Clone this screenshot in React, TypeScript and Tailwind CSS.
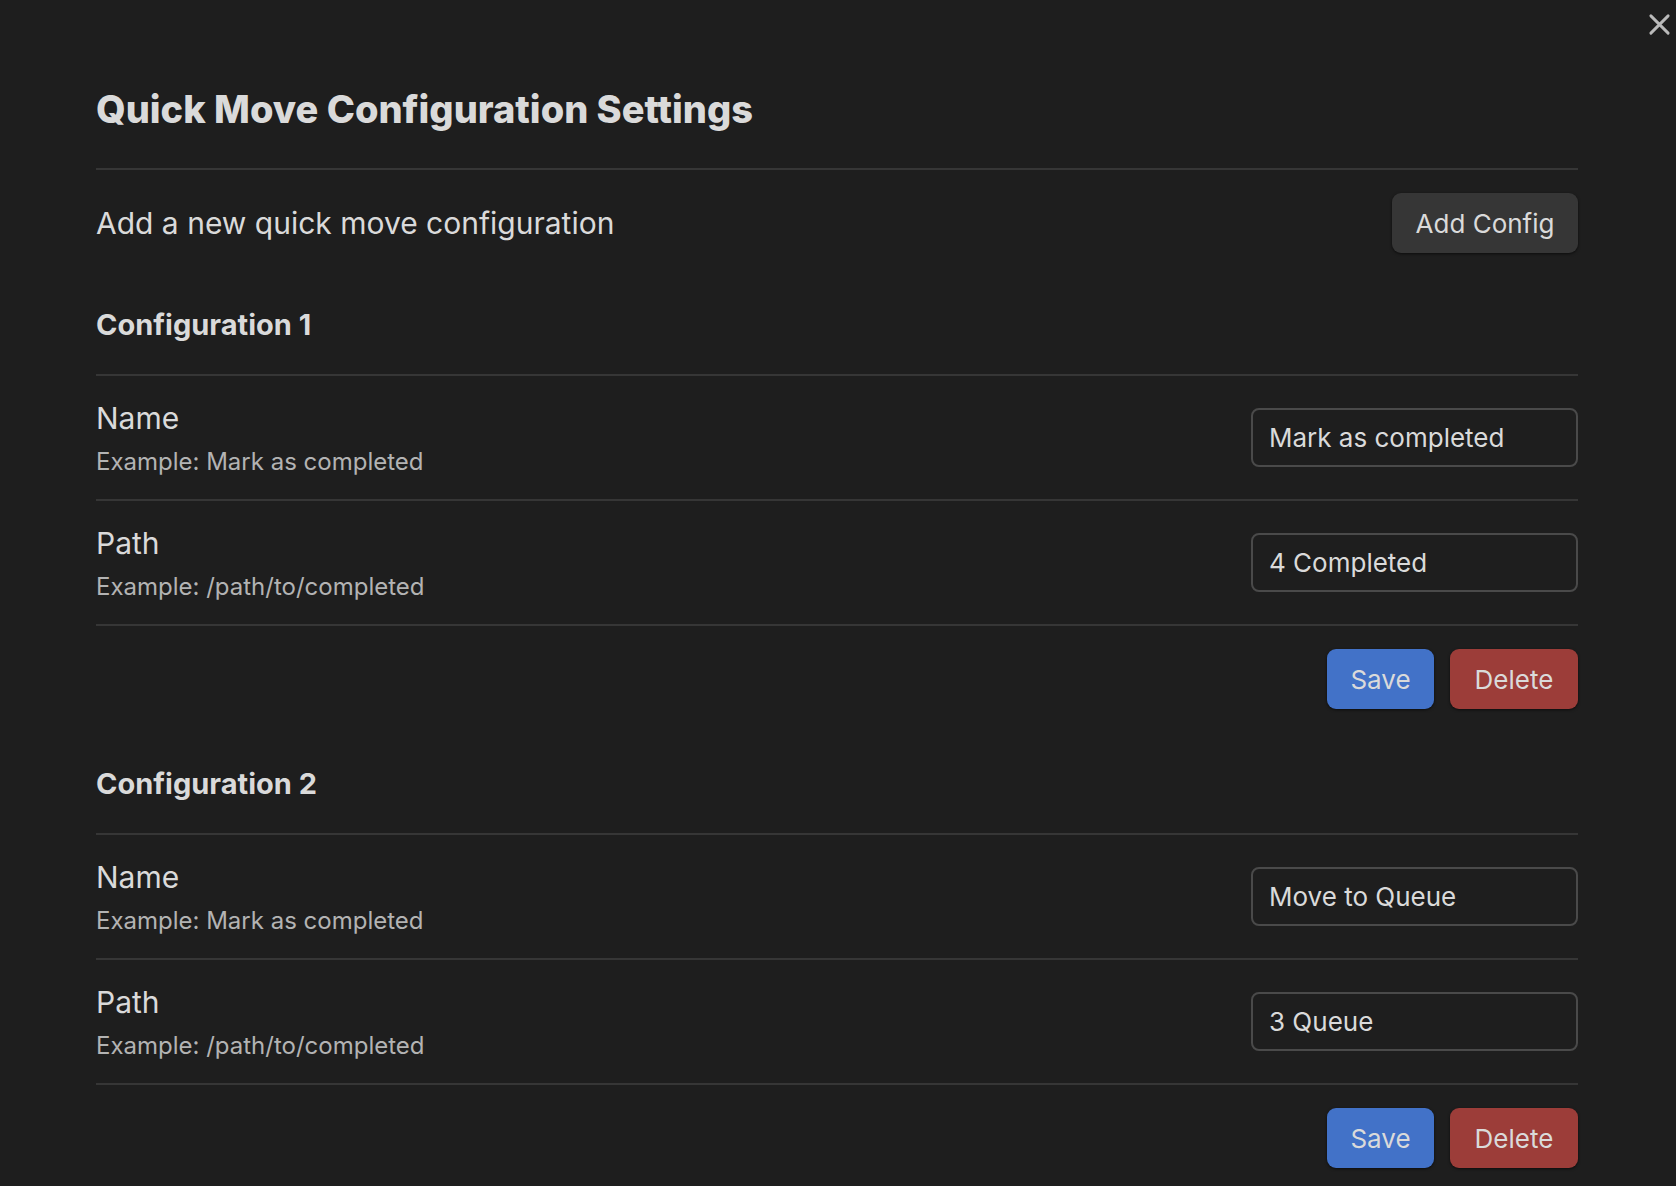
import React from 'react';

type Config = { name: string; path: string };

const configs: Config[] = [
  { name: 'Mark as completed', path: '4 Completed' },
  { name: 'Move to Queue', path: '3 Queue' },
];

function SettingRow({ label, desc, value }: { label: string; desc: string; value: string }) {
  return (
    <div className="flex h-[125px] items-center justify-between border-t-2 border-[#363636]">
      <div className="flex flex-col">
        <div className="text-[30px] leading-[38px] text-[#dadada]">{label}</div>
        <div className="mt-[10px] text-[24px] leading-[30px] text-[#b3b3b3]">{desc}</div>
      </div>
      <input
        defaultValue={value}
        className="h-[59px] w-[327px] rounded-[8px] border-2 border-[#4a4a4a] bg-[#1e1e1e] px-[16px] text-[26px] text-[#dadada] outline-none"
      />
    </div>
  );
}

export default function App() {
  return (
    <div className="relative min-h-screen w-full bg-[#1e1e1e] font-['Inter',sans-serif]">
      {/* Close button */}
      <button className="absolute right-[5px] top-[12px] flex h-[24px] w-[24px] items-center justify-center text-[#bababa]">
        <svg width="23" height="23" viewBox="0 0 24 24" fill="none" stroke="currentColor" strokeWidth="3" strokeLinecap="round">
          <path d="M3 3L21 21M21 3L3 21" />
        </svg>
      </button>

      <div className="pl-[96px] pr-[98px] pt-[86px]">
        {/* Title */}
        <h2 className="border-b-2 border-[#363636] pb-[36px] text-[38px] font-extrabold leading-[46px] text-[#dadada]">
          Quick Move Configuration Settings
        </h2>

        {/* Add row */}
        <div className="flex items-center justify-between pb-[21px] pt-[23px]">
          <div className="text-[30px] text-[#dadada]">Add a new quick move configuration</div>
          <button className="h-[60px] w-[186px] rounded-[9px] bg-[#363636] text-[26px] text-[#dadada] shadow-[0_1px_3px_rgba(0,0,0,0.6)]">
            Add Config
          </button>
        </div>

        {configs.map((c, i) => (
          <div key={i}>
            <div className="flex h-[100px] items-end pb-[31px]">
              <h3 className="text-[29px] font-bold leading-[36px] text-[#dadada]">Configuration {i + 1}</h3>
            </div>
            <SettingRow label="Name" desc="Example: Mark as completed" value={c.name} />
            <SettingRow label="Path" desc="Example: /path/to/completed" value={c.path} />
            <div className="flex justify-end gap-[16px] border-t-2 border-[#363636] pb-[24px] pt-[23px]">
              <button className="h-[60px] w-[107px] rounded-[9px] bg-[#4272c8] text-[26px] text-[#dadada] shadow-[0_1px_3px_rgba(0,0,0,0.6)]">
                Save
              </button>
              <button className="h-[60px] w-[128px] rounded-[9px] bg-[#9c3d39] text-[26px] text-[#dadada] shadow-[0_1px_3px_rgba(0,0,0,0.6)]">
                Delete
              </button>
            </div>
          </div>
        ))}
      </div>
    </div>
  );
}
